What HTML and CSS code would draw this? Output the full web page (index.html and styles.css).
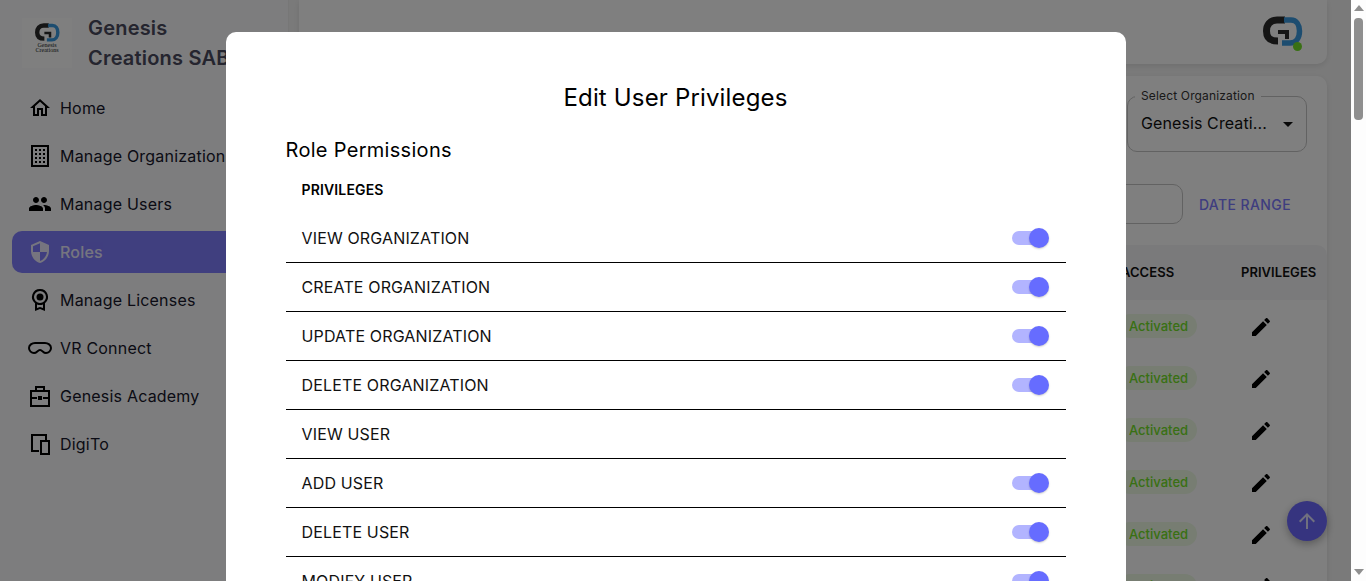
FILE: index.html
```html
<!DOCTYPE html>
<html lang="en">
<head>
    <meta charset="UTF-8">
    <meta name="viewport" content="width=device-width, initial-scale=1.0">
    <title>Edit User Privileges</title>
    <link rel="stylesheet" href="styles.css">
</head>
<body>
    <svg class="icon-defs" aria-hidden="true">
        <symbol id="brand" viewBox="0 0 40 32">
            <path d="M22 4H14C7 4 3.500 9 3.500 15C3.500 22 7 25 15 25" fill="none" stroke="#2b2b2b" stroke-width="7"/>
            <path d="M21 4H28C33.500 4 36.500 9 36.500 15C36.500 22 33 27 27 27H19" fill="none" stroke="#3a9ae0" stroke-width="5.500"/>
            <path d="M15 16H24V23" fill="none" stroke="#2b2b2b" stroke-width="4"/>
        </symbol>
        <symbol id="edit" viewBox="0 0 24 24">
            <path d="M3 17.250V21h3.750L17.810 9.940l-3.750-3.750L3 17.250zM20.710 7.040c.39-.39.39-1.020 0-1.410l-2.340-2.340c-.39-.39-1.020-.39-1.410 0l-1.830 1.830 3.750 3.750 1.830-1.830z"/>
        </symbol>
    </svg>

    <div class="page">
        <div class="app">
            <!-- Sidebar -->
            <aside class="sidebar">
                <div class="brand">
                    <div class="brand-logo">
                        <svg class="brand-mark"><use href="#brand"/></svg>
                        <span class="brand-small">Genesis<br>Creations</span>
                    </div>
                    <div class="brand-name">Genesis Creations SAB</div>
                </div>
                <nav class="nav">
                    <a class="nav-item">
                        <svg class="nav-icon" viewBox="0 0 24 24"><path d="M12 5.690l5 4.500V18h-2v-6H9v6H7v-7.810l5-4.500M12 3L2 12h3v8h6v-6h2v6h6v-8h3L12 3z"/></svg>
                        <span>Home</span>
                    </a>
                    <a class="nav-item">
                        <svg class="nav-icon" viewBox="0 0 24 24"><path fill-rule="evenodd" d="M3 1h18v22H3zM5 3v18h14V3z"/><path d="M7 5h2v2H7zM11 5h2v2h-2zM15 5h2v2h-2zM7 9h2v2H7zM11 9h2v2h-2zM15 9h2v2h-2zM7 13h2v2H7zM11 13h2v2h-2zM15 13h2v2h-2zM7 17h2v2H7zM11 17h2v2h-2zM15 17h2v2h-2z"/></svg>
                        <span>Manage Organizations</span>
                    </a>
                    <a class="nav-item">
                        <svg class="nav-icon" viewBox="0 0 24 24"><path d="M16 11c1.660 0 2.990-1.340 2.990-3S17.660 5 16 5c-1.660 0-3 1.340-3 3s1.340 3 3 3zm-8 0c1.660 0 2.990-1.340 2.990-3S9.660 5 8 5C6.340 5 5 6.340 5 8s1.340 3 3 3zm0 2c-2.330 0-7 1.170-7 3.500V19h14v-2.500c0-2.330-4.670-3.500-7-3.500zm8 0c-.29 0-.62.02-.97.05 1.160.84 1.970 1.970 1.970 3.450V19h6v-2.500c0-2.330-4.670-3.500-7-3.500z"/></svg>
                        <span>Manage Users</span>
                    </a>
                    <a class="nav-item active">
                        <svg class="nav-icon" viewBox="0 0 24 24"><path d="M12 1L3 5v6c0 5.550 3.840 10.740 9 12 5.160-1.260 9-6.450 9-12V5l-9-4zm0 10.990h7c-.53 4.120-3.280 7.790-7 8.940V12H5V6.300l7-3.110v8.800z"/></svg>
                        <span>Roles</span>
                    </a>
                    <a class="nav-item">
                        <svg class="nav-icon" viewBox="0 0 24 24"><path fill-rule="evenodd" d="M12 1a8 8 0 0 1 5 14.250V23l-5-2-5 2v-7.750A8 8 0 0 1 12 1zm0 2a6 6 0 1 0 0 12 6 6 0 0 0 0-12zM9 16.500v3.600l3-1.200 3 1.200v-3.600a8 8 0 0 1-6 0z"/><circle cx="12" cy="9" r="3.500"/></svg>
                        <span>Manage Licenses</span>
                    </a>
                    <a class="nav-item">
                        <svg class="nav-icon" viewBox="0 0 24 24"><path d="M7 7h10c3 0 6 2 6 5s-2.500 5-5 5c-3 0-3.500-3-6-3s-3 3-6 3c-2.500 0-5-2-5-5s3-5 6-5z" fill="none" stroke="#000" stroke-width="2"/></svg>
                        <span>VR Connect</span>
                    </a>
                    <a class="nav-item">
                        <svg class="nav-icon" viewBox="0 0 24 24"><path d="M3 7h18v15H3zM8 7V3h8v4M3 14h6M15 14h6" fill="none" stroke="#000" stroke-width="2"/><path d="M10 12h4v4h-4z"/></svg>
                        <span>Genesis Academy</span>
                    </a>
                    <a class="nav-item">
                        <svg class="nav-icon" viewBox="0 0 24 24"><path d="M18 8V3H4v16h7" fill="none" stroke="#000" stroke-width="2"/><path d="M13 9h8v13h-8z" fill="none" stroke="#000" stroke-width="2"/></svg>
                        <span>DigiTo</span>
                    </a>
                </nav>
            </aside>

            <!-- Main area, mostly covered by the dialog -->
            <main class="main">
                <header class="topbar">
                    <div class="avatar">
                        <svg class="avatar-mark"><use href="#brand"/></svg>
                        <span class="avatar-dot"></span>
                    </div>
                </header>

                <section class="card">
                    <div class="filter-row">
                        <div class="select-field">
                            <span class="select-label">Select Organization</span>
                            <span class="select-value">Genesis Creati...</span>
                            <span class="select-caret"></span>
                        </div>
                    </div>
                    <div class="date-row">
                        <div class="date-input"></div>
                        <span class="date-btn">DATE RANGE</span>
                    </div>
                    <div class="users-table">
                        <div class="users-head">
                            <span class="col-access">ACCESS</span>
                            <span class="col-priv">PRIVILEGES</span>
                        </div>
                        <div class="users-row">
                            <span class="col-access"><span class="chip">Activated</span></span>
                            <span class="col-priv"><svg class="edit-icon"><use href="#edit"/></svg></span>
                        </div>
                        <div class="users-row">
                            <span class="col-access"><span class="chip">Activated</span></span>
                            <span class="col-priv"><svg class="edit-icon"><use href="#edit"/></svg></span>
                        </div>
                        <div class="users-row">
                            <span class="col-access"><span class="chip">Activated</span></span>
                            <span class="col-priv"><svg class="edit-icon"><use href="#edit"/></svg></span>
                        </div>
                        <div class="users-row">
                            <span class="col-access"><span class="chip">Activated</span></span>
                            <span class="col-priv"><svg class="edit-icon"><use href="#edit"/></svg></span>
                        </div>
                        <div class="users-row">
                            <span class="col-access"><span class="chip">Activated</span></span>
                            <span class="col-priv"><svg class="edit-icon"><use href="#edit"/></svg></span>
                        </div>
                        <div class="users-row">
                            <span class="col-access"><span class="chip">Activated</span></span>
                            <span class="col-priv"><svg class="edit-icon"><use href="#edit"/></svg></span>
                        </div>
                    </div>
                </section>
            </main>

            <button class="scroll-top">
                <svg viewBox="0 0 24 24"><path d="M4 12l1.410 1.410L11 7.830V20h2V7.830l5.580 5.590L20 12l-8-8-8 8z"/></svg>
            </button>

            <!-- Dialog -->
            <div class="overlay">
                <div class="modal">
                    <h2 class="modal-title">Edit User Privileges</h2>
                    <h3 class="modal-sub">Role Permissions</h3>
                    <div class="priv-head">PRIVILEGES</div>
                    <div class="priv-row"><span>VIEW ORGANIZATION</span><span class="toggle"><span class="toggle-thumb"></span></span></div>
                    <div class="priv-row"><span>CREATE ORGANIZATION</span><span class="toggle"><span class="toggle-thumb"></span></span></div>
                    <div class="priv-row"><span>UPDATE ORGANIZATION</span><span class="toggle"><span class="toggle-thumb"></span></span></div>
                    <div class="priv-row"><span>DELETE ORGANIZATION</span><span class="toggle"><span class="toggle-thumb"></span></span></div>
                    <div class="priv-row"><span>VIEW USER</span></div>
                    <div class="priv-row"><span>ADD USER</span><span class="toggle"><span class="toggle-thumb"></span></span></div>
                    <div class="priv-row"><span>DELETE USER</span><span class="toggle"><span class="toggle-thumb"></span></span></div>
                    <div class="priv-row"><span>MODIFY USER</span><span class="toggle"><span class="toggle-thumb"></span></span></div>
                </div>
            </div>
        </div>

        <!-- Window scrollbar -->
        <div class="scrollbar">
            <span class="scroll-arrow up"></span>
            <span class="scroll-thumb"></span>
            <span class="scroll-arrow down"></span>
        </div>
    </div>
</body>
</html>
```

FILE: styles.css
```css
* {
    box-sizing: border-box;
}
body {
    margin: 0;
    font-family: Inter, "Liberation Sans", sans-serif;
    color: #111;
    background-color: #f5f5f5;
}
.icon-defs {
    display: none;
}
.page {
    display: flex;
    height: 581px;
    overflow: hidden;
}
.app {
    position: relative;
    flex: 1;
    display: flex;
    overflow: hidden;
    background-color: #f5f5f5;
}

/* sidebar */
.sidebar {
    width: 289px;
    flex-shrink: 0;
    padding: 13px 12px 0;
    background-color: #fafafc;
    border-right: 1px solid #eee;
}
.brand {
    display: flex;
    gap: 16px;
    padding-left: 10px;
    height: 60px;
}
.brand-logo {
    width: 50px;
    height: 50px;
    margin-top: 5px;
    padding-top: 5px;
    display: flex;
    flex-direction: column;
    align-items: center;
    background-color: #fff;
}
.brand-mark {
    width: 25px;
    height: 20px;
}
.brand-small {
    font-family: "Liberation Serif", serif;
    font-size: 6px;
    line-height: 5px;
    text-align: center;
    color: #222;
}
.brand-name {
    width: 165px;
    font-size: 20px;
    line-height: 30px;
    font-weight: 600;
    letter-spacing: 0.2px;
    color: #4a4a5e;
}
.nav {
    margin-top: 14px;
    display: flex;
    flex-direction: column;
    gap: 6px;
}
.nav-item {
    display: flex;
    align-items: center;
    gap: 8px;
    height: 42px;
    padding-left: 16px;
    border-radius: 10px;
    font-size: 16px;
    letter-spacing: 0.2px;
    white-space: nowrap;
    overflow: hidden;
    color: #16162a;
}
.nav-icon {
    width: 24px;
    height: 24px;
    flex-shrink: 0;
}
.nav-item.active {
    background-color: #7d7aff;
    color: #fff;
    font-weight: 500;
    opacity: 0.97;
}
.nav-item.active span {
    opacity: 0.85;
}
.nav-item.active .nav-icon {
    fill: #fff;
    opacity: 0.85;
}

/* main */
.main {
    flex: 1;
    min-width: 0;
    padding: 0 24px 0 10px;
    display: flex;
    flex-direction: column;
    gap: 12px;
}
.topbar {
    flex-shrink: 0;
    height: 64px;
    display: flex;
    justify-content: flex-end;
    align-items: flex-start;
    background-color: #fff;
    border-radius: 0 0 10px 10px;
    box-shadow: 0 2px 6px rgba(0, 0, 0, 0.1);
}
.avatar {
    position: relative;
    width: 40px;
    height: 32px;
    margin: 16px 24px 0 0;
}
.avatar-mark {
    width: 40px;
    height: 32px;
}
.avatar-dot {
    position: absolute;
    right: 1px;
    bottom: -3px;
    width: 9px;
    height: 9px;
    border-radius: 50%;
    background-color: #72e128;
}
.card {
    flex: 1;
    padding-top: 20px;
    background-color: #fff;
    border-radius: 10px 10px 0 0;
    box-shadow: 0 2px 6px rgba(0, 0, 0, 0.1);
}
.filter-row {
    display: flex;
    justify-content: flex-end;
    padding-right: 20px;
}
.select-field {
    position: relative;
    width: 180px;
    height: 56px;
    display: flex;
    align-items: center;
    justify-content: space-between;
    padding: 0 13px 2px 13px;
    border: 1px solid #c4c4c4;
    border-radius: 10px;
}
.select-label {
    position: absolute;
    top: -9px;
    left: 7px;
    padding: 0 6px;
    font-size: 12px;
    line-height: 15px;
    letter-spacing: 0.15px;
    white-space: nowrap;
    color: #333;
    background-color: #fff;
}
.select-value {
    font-size: 16px;
    letter-spacing: 0.1px;
    white-space: nowrap;
}
.select-caret {
    width: 0;
    height: 0;
    margin-top: 2px;
    border-left: 5px solid transparent;
    border-right: 5px solid transparent;
    border-top: 5px solid #111;
}
.date-row {
    display: flex;
    justify-content: flex-end;
    align-items: center;
    gap: 16px;
    margin-top: 32px;
    padding-right: 36px;
}
.date-input {
    width: 300px;
    height: 40px;
    border: 1px solid #c4c4c4;
    border-radius: 10px;
}
.date-btn {
    font-size: 14px;
    font-weight: 500;
    letter-spacing: 0.4px;
    color: #7d7aff;
}
.users-table {
    margin-top: 21px;
}
.users-head {
    height: 55px;
    padding-bottom: 2px;
    display: flex;
    align-items: center;
    justify-content: flex-end;
    font-size: 13px;
    font-weight: 600;
    letter-spacing: 0.05px;
    background-color: #f5f5f7;
    border-radius: 10px 10px 0 0;
}
.users-row {
    height: 52px;
    display: flex;
    align-items: center;
    justify-content: flex-end;
}
.col-access {
    width: 123px;
    flex-shrink: 0;
}
.users-head .col-access {
    padding-left: 3px;
}
.col-priv {
    width: 86px;
    flex-shrink: 0;
}
.chip {
    display: inline-block;
    height: 24px;
    padding: 0 9px 0 11px;
    font-size: 13px;
    line-height: 24px;
    font-weight: 500;
    color: #72e128;
    background-color: #eefbe5;
    border-radius: 12px;
}
.edit-icon {
    display: block;
    width: 24px;
    height: 24px;
    margin: 1px 0 0 8px;
}
.scroll-top {
    position: absolute;
    right: 24px;
    bottom: 40px;
    width: 40px;
    height: 40px;
    padding: 8px;
    border: none;
    border-radius: 50%;
    background-color: #6c68ff;
    box-shadow: 0 3px 8px rgba(0, 0, 0, 0.3);
}
.scroll-top svg {
    display: block;
    fill: #fff;
    opacity: 0.8;
}

/* dialog */
.overlay {
    position: absolute;
    inset: 0;
    display: flex;
    justify-content: center;
    align-items: flex-start;
    padding-top: 32px;
    overflow: hidden;
    background-color: rgba(0, 0, 0, 0.5);
}
.modal {
    width: 900px;
    flex-shrink: 0;
    padding: 48px 60px 0;
    background-color: #fff;
    border-radius: 10px;
}
.modal-title {
    margin: 0;
    font-size: 24px;
    line-height: 36px;
    font-weight: 400;
    letter-spacing: 0.16px;
    text-align: center;
    color: #000;
}
.modal-sub {
    margin: 19px 0 1px;
    font-size: 20px;
    line-height: 30px;
    font-weight: 400;
    letter-spacing: 0.3px;
    color: #000;
}
.priv-head {
    height: 48px;
    line-height: 48px;
    padding-left: 16px;
    font-size: 14px;
    font-weight: 600;
    letter-spacing: 0.15px;
    color: #000;
}
.priv-row {
    height: 49px;
    display: flex;
    align-items: center;
    justify-content: space-between;
    padding: 0 22px 0 16px;
    font-size: 16px;
    letter-spacing: 0.15px;
    border-bottom: 1px solid #000;
}
.toggle {
    width: 32px;
    height: 14px;
    display: flex;
    align-items: center;
    justify-content: flex-end;
    background-color: #b2b4ff;
    border-radius: 7px;
}
.toggle-thumb {
    width: 20px;
    height: 20px;
    margin-right: -5px;
    flex-shrink: 0;
    border-radius: 50%;
    background-color: #666cff;
    box-shadow: 0 1px 2px rgba(0, 0, 0, 0.2);
}

/* fake window scrollbar */
.scrollbar {
    width: 15px;
    flex-shrink: 0;
    display: flex;
    flex-direction: column;
    align-items: center;
    padding: 5px 0 6px;
    background-color: #fdfdfd;
}
.scroll-arrow {
    width: 0;
    height: 0;
    border-left: 5px solid transparent;
    border-right: 5px solid transparent;
}
.scroll-arrow.up {
    border-bottom: 6px solid #8f8f8f;
}
.scroll-arrow.down {
    margin-top: auto;
    border-top: 6px solid #8f8f8f;
}
.scroll-thumb {
    width: 9px;
    height: 102px;
    margin-top: 7px;
    border-radius: 4px;
    background-color: #8f8f8f;
}
```
